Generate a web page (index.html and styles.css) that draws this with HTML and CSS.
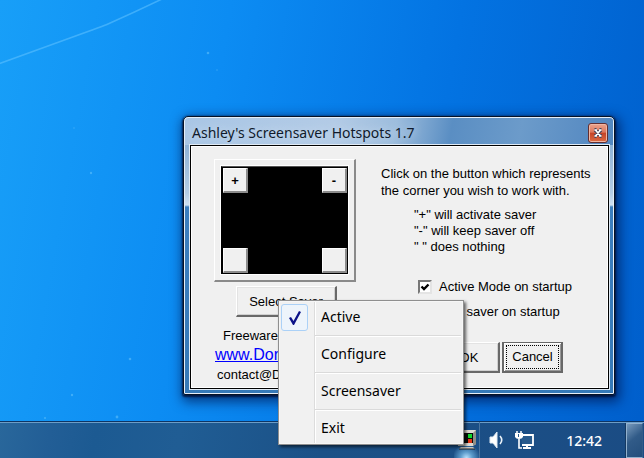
FILE: index.html
```html
<!DOCTYPE html>
<html lang="en">
<head>
<meta charset="utf-8">
<title>Ashley's Screensaver Hotspots 1.7</title>
<link rel="stylesheet" href="styles.css">
</head>
<body>
<main class="desktop">
  <svg class="wallpaper" width="644" height="420" viewBox="0 0 644 420" aria-hidden="true">
    <path d="M-2 64Q34 51 70 38T108 24Q135 12 162 -1" fill="none" stroke="#5cc0ff" stroke-width="1.6" opacity=".6"/>
    <g fill="#5fc0fb" opacity=".6"><circle cx="208" cy="53" r="1.3"/><circle cx="217" cy="70" r=".7"/><circle cx="91" cy="173" r="1.2"/><circle cx="74" cy="128" r=".7"/><circle cx="130" cy="359" r="1.3"/><circle cx="72" cy="395" r="1.2"/><circle cx="117" cy="417" r="1.4"/><circle cx="45" cy="418" r="1"/></g>
  </svg>

  <section class="window" aria-label="Ashley's Screensaver Hotspots">
    <header class="titlebar">
      <h1 class="title">Ashley's Screensaver Hotspots 1.7</h1>
      <button class="close" type="button" aria-label="Close">
        <svg width="14" height="12" viewBox="0 0 14 12"><path d="M4 3L10 9M10 3L4 9M3.5 2.8h2M8.500 2.800h2M3.500 9.200h2M8.500 9.200h2" stroke="#49475c" stroke-width="3.600"/><path d="M4.500 3L9.500 9M9.500 3L4.500 9M3.500 3h2.500M8 3h2.500M3.500 9h2.500M8 9h2.500" stroke="#fff" stroke-width="1.600"/></svg>
      </button>
    </header>
    <form class="client">
      <div class="left">
        <div class="group">
          <div class="screen">
            <button class="corner" type="button" aria-label="Top left">+</button>
            <button class="corner" type="button" aria-label="Top right">-</button>
            <button class="corner" type="button" aria-label="Bottom left"></button>
            <button class="corner" type="button" aria-label="Bottom right"></button>
          </div>
        </div>
        <button class="btn select" type="button">Select Saver</button>
        <div class="credits">
          <p class="freeware">Freeware</p>
          <a class="site" href="#">www.Don</a>
          <p class="contact">contact@D</p>
        </div>
      </div>
      <div class="right">
        <p class="intro">Click on the button which represents<br>the corner you wish to work with.</p>
        <ul class="legend">
          <li>"+" will activate saver</li>
          <li>"-" will keep saver off</li>
          <li>" " does nothing</li>
        </ul>
        <div class="options">
          <label class="option"><input class="check" type="checkbox" checked><span>Active Mode on startup</span></label>
          <label class="option"><input class="check" type="checkbox"><span>Run saver on startup</span></label>
        </div>
        <div class="actions">
          <button class="btn" type="button">OK</button>
          <button class="btn default" type="button"><span class="focus">Cancel</span></button>
        </div>
      </div>
    </form>
  </section>

  <footer class="taskbar">
    <div class="tray">
      <button class="tray-item saver" type="button" aria-label="Screensaver Hotspots">
        <svg width="20" height="20" viewBox="0 0 20 20"><path d="M1 2L4 0H19V14L16 16H1Z" fill="#dedbd3"/><path d="M16 3L19 0V14L16 16Z" fill="#918e86"/><rect x="3" y="3" width="13" height="10" fill="#080d0b"/><rect x="11" y="4" width="4" height="4" fill="#10d82c"/><rect x="11" y="9" width="4" height="4" fill="#e53717"/><path d="M4 17H16L18 19H2Z" fill="#c9c6bf"/><path d="M2 19H18" stroke="#222"/></svg>
      </button>
      <button class="tray-item" type="button" aria-label="Volume">
        <svg width="18" height="20" viewBox="0 0 18 20"><path d="M2 7H5L9 2V18L5 13H2Z" fill="#fff" stroke="#dce8f3" stroke-linejoin="round"/><path d="M12 6Q15.500 10 12 14" fill="none" stroke="#e8f1f9" stroke-width="1.600"/></svg>
      </button>
      <button class="tray-item" type="button" aria-label="Network">
        <svg width="21" height="20" viewBox="0 0 21 20"><path d="M7 5H19V15H8" fill="#285a8d" stroke="#fff" stroke-width="1.800"/><path d="M9 18H17M13 15V18" stroke="#fff" stroke-width="2"/><path d="M3 1V4M7 1V4" stroke="#fff" stroke-width="1.500"/><path d="M1 3H9V7Q8 9 5 9Q2 9 1 7Z" fill="#fff"/><path d="M4.500 4V7" stroke="#285a8d"/><path d="M5 9V18H8" fill="none" stroke="#fff" stroke-width="1.600"/></svg>
      </button>
    </div>
    <time class="clock">12:42</time>
    <button class="show-desktop" type="button" aria-label="Show desktop"></button>
  </footer>

  <div class="menu" role="menu">
    <button class="item" type="button" role="menuitemcheckbox" aria-checked="true"><span class="tick"><svg width="14" height="16" viewBox="0 0 14 16"><path d="M1 8L3 7L5.500 11L11 1L13 2L6 15H5Z" fill="#0b1288"/></svg></span>Active</button>
    <hr class="sep">
    <button class="item" type="button" role="menuitem">Configure</button>
    <hr class="sep">
    <button class="item" type="button" role="menuitem">Screensaver</button>
    <hr class="sep">
    <button class="item" type="button" role="menuitem">Exit</button>
  </div>
</main>
</body>
</html>
```
FILE: styles.css
```css
* { box-sizing: border-box; }

body {
  margin: 0;
  font-family: "Liberation Sans", sans-serif;
  font-size: 13px;
  color: #000;
}

button { font: inherit; color: inherit; padding: 0; }
p, ul, h1 { margin: 0; padding: 0; font-weight: normal; }

.desktop {
  position: relative;
  min-height: 100vh;
  display: flex;
  flex-direction: column;
  justify-content: flex-end;
  overflow: hidden;
  background: linear-gradient(100deg, #189ff8 0%, #0c8cf3 32%, #0373e2 64%, #005ecb 100%);
}

.wallpaper { position: absolute; left: 0; top: 0; }

.window {
  position: absolute;
  left: 183px;
  top: 116px;
  width: 432px;
  padding: 0 5px 5px 6px;
  border: 1px solid #061226;
  border-radius: 5px 5px 2px 2px;
  background:
    linear-gradient(100deg, #a9c6e5 0%, #b3cbe6 35%, #9dbddd 49%, #5a8ec3 62%, #6c9bca 78%, #5186c0 100%) top / 100% 28px no-repeat,
    linear-gradient(#78a3cf 0, #b4cce5 76px, #cfe0f2 88px, #3b7ebf 90px, #3579b8 100%);
  box-shadow: inset 0 0 0 1px #e5eef8, 0 1px 2px 1px rgba(0, 12, 50, .8), 2px 4px 12px 3px rgba(0, 20, 75, .65);
}

.titlebar {
  display: flex;
  align-items: center;
  justify-content: space-between;
  height: 28px;
  padding: 3px 1px 0 2px;
}

.title {
  font-family: "Noto Sans", sans-serif;
  font-size: 14px;
  line-height: 20px;
  color: #101a2b;
  text-shadow: 0 0 8px #d3e2f2;
}

.close {
  display: grid;
  place-items: center;
  width: 20px;
  height: 20px;
  border: 1px solid #632f32;
  border-radius: 3px;
  background: linear-gradient(#eba48e 0, #dc765b 46%, #c64327 50%, #dc6a42 100%);
  box-shadow: inset 0 0 0 1px #f0b5a1;
}

.client {
  display: flex;
  gap: 25px;
  height: 244px;
  padding: 13px 4px 0 23px;
  border: 1px solid #000;
  background: #f0f0f0;
  box-shadow: inset 0 0 0 1px #fff, 0 0 0 1px #e1ebf5;
}

.left { width: 142px; }

.group {
  padding: 6px;
  border: 1px solid;
  border-color: #fff #8a8a8a #8a8a8a #fff;
  border-width: 1px 2px 2px 1px;
}

.screen {
  display: grid;
  grid-template-columns: 25px 25px;
  justify-content: space-between;
  align-content: space-between;
  height: 108px;
  padding: 1px 0 0 1px;
  border: 1px solid #000;
  border-top-color: #555;
  background: #000;
  box-shadow: 0 0 0 1px #fff;
}

.corner {
  width: 25px;
  height: 25px;
  border: 1px solid;
  border-color: #fff #8c8c8c #8c8c8c #fff;
  border-width: 1px 2px 2px 1px;
  background: #f0f0f0;
  font-weight: bold;
}

.btn {
  min-width: 61px;
  height: 31px;
  border: 1px solid;
  border-color: #fff #696969 #696969 #fff;
  border-width: 1px 2px 2px 1px;
  background: #f0f0f0;
  box-shadow: inset 1px 1px #e3e3e3, inset -1px -1px #d0d0d0;
}

.select { display: block; width: 101px; margin: 4px 0 0 22px; }

.credits { line-height: 19px; white-space: nowrap; padding: 9px 0 0 1px; }
.freeware { padding-left: 8px; }
.site { display: block; font-size: 16px; color: #00f; }
.contact { padding-left: 2px; line-height: 21px; }

.right { flex: 1; white-space: nowrap; }

.intro { line-height: 17px; padding-top: 6px; }
.legend { list-style: none; padding: 8px 0 0 33px; line-height: 16px; }

.options { display: grid; gap: 5px; padding: 22px 0 0 37px; }
.option { display: flex; align-items: center; gap: 7px; line-height: 20px; }

.check {
  appearance: none;
  width: 14px;
  height: 14px;
  margin: 0;
  border: 2px solid;
  border-color: #777 #e4e4e4 #e4e4e4 #777;
  background: #fff;
}

.check:checked {
  background: #fff url("data:image/svg+xml,%3Csvg xmlns='http://www.w3.org/2000/svg' viewBox='0 0 10 10'%3E%3Cpath d='M1.500 4.500L4 7L8.500 2.500' fill='none' stroke='black' stroke-width='2.400'/%3E%3C/svg%3E");
}

.actions { display: flex; gap: 2px; padding: 20px 0 0 58px; }

.default { border: 2px solid #686868; border-top-width: 1px; box-shadow: inset 1px 1px #fff, inset -1px -1px #999; }
.focus { display: block; margin: 2px; line-height: 22px; border: 1px dotted #000; }

.menu {
  position: absolute;
  left: 278px;
  top: 300px;
  width: 186px;
  padding: 3px 2px 2px;
  border: 1px solid #8f8f8f;
  background: linear-gradient(90deg, #f1f1f1 35px, #dcdcdc 35px 36px, #fff 36px 37px, #f0f0f0 37px);
  box-shadow: inset 0 0 0 1px #f6f6f6, 2px 2px 3px rgba(0, 0, 0, .6);
  font-family: "Noto Sans", sans-serif;
  font-size: 14px;
}

.item {
  position: relative;
  display: block;
  width: 100%;
  height: 27px;
  padding: 0 0 2px 40px;
  border: 0;
  background: none;
  text-align: left;
}

.tick {
  position: absolute;
  left: 0;
  top: 0;
  display: grid;
  place-items: center;
  width: 27px;
  height: 27px;
  border: 1px solid #abd1f7;
  border-radius: 3px;
  background: #edf4fb;
}

.sep {
  height: 2px;
  margin: 4px 0 4px 34px;
  border: 0;
  border-top: 1px solid #dadada;
  border-bottom: 1px solid #fff;
}

.taskbar {
  position: relative;
  display: flex;
  align-items: stretch;
  justify-content: flex-end;
  height: 37px;
  padding-right: 1px;
  border-top: 1px solid #0c3565;
  background: linear-gradient(100deg, #29679b 0%, #225e96 8%, #1c5a92 15%, #205d94 28%, #1b5187 50%, #1b4c84 100%);
  box-shadow: inset 0 1px #6d9dc6;
}

.tray { display: flex; gap: 8px; }

.tray-item { display: grid; place-items: center; border: 0; background: none; }

.saver {
  width: 26px;
  border-right: 1px solid #4b759f;
  background: radial-gradient(circle at 50% 100%, #b9e2ff 0, #5c9bcb 6px, transparent 14px);
}

.clock {
  width: 91px;
  padding: 2px 24px 0 0;
  text-align: right;
  font: 500 14px/34px "Noto Sans", sans-serif;
  color: #fff;
}

.show-desktop {
  width: 17px;
  margin-top: 1px;
  border: 1px solid #92b1ce;
  border-right-color: #335c87;
  background: linear-gradient(140deg, #7799bb, #315b88 45%, #244e7c);
  box-shadow: -1px 0 #153961;
}
```
